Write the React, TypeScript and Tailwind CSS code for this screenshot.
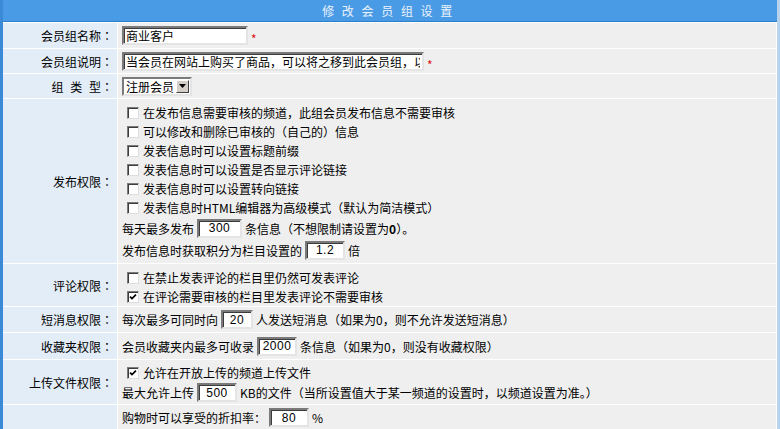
import React from 'react';

const font = "font-['Noto_Sans_CJK_SC','Noto_Sans',sans-serif]";

const Field = ({ value, className = '', center = false }: { value: string; className?: string; center?: boolean }) => (
  <input
    readOnly
    value={value}
    className={`h-[19px] shrink-0 bg-white border-2 border-t-[#7a7a7a] border-l-[#7a7a7a] border-r-[#e4e4e4] border-b-[#e4e4e4] shadow-[inset_1px_1px_0_#3c3c3c] px-[2px] text-[12px] leading-[15px] text-black outline-none ${
      center ? "text-center font-['Liberation_Sans',sans-serif] tracking-[0.5px]" : ''
    } ${className}`}
  />
);

const Check = ({ checked = false }: { checked?: boolean }) => (
  <span className="w-[12px] h-[12px] ml-[5px] mr-[4px] shrink-0 bg-white border border-t-[#7a7a7a] border-l-[#7a7a7a] border-r-[#dedede] border-b-[#dedede] shadow-[inset_1px_1px_0_#3c3c3c] flex items-center justify-center">
    {checked && (
      <svg width="8" height="8" viewBox="0 0 8 8">
        <path d="M1 3.6 L3 5.6 L7 1.6" fill="none" stroke="#000" strokeWidth="1.7" />
      </svg>
    )}
  </span>
);

const Line = ({ children, h = 'h-[19px]' }: { children: React.ReactNode; h?: string }) => (
  <div className={`${h} flex items-center whitespace-nowrap`}>{children}</div>
);

// label text followed by a centred full-width colon
const Label = ({ text, spaced = false }: { text: string; spaced?: boolean }) => (
  <span className={spaced ? '[word-spacing:4px]' : ''}>
    {text}
    <span className="font-['Noto_Sans_CJK_TC',sans-serif]">：</span>
  </span>
);

const Row = ({
  label,
  h,
  children,
  body = 'flex items-center',
}: {
  label: React.ReactNode;
  h: string;
  children: React.ReactNode;
  body?: string;
}) => (
  <div className={`${h} flex gap-px shrink-0`}>
    <div className="w-[114px] shrink-0 bg-[#e3edf8] flex items-center justify-end pr-[4px] whitespace-nowrap">{label}</div>
    <div className={`flex-1 bg-[#efefef] pl-[4px] ${body}`}>{children}</div>
  </div>
);

const Star = () => <span className="ml-[3px] text-[12px] text-[#e01010] translate-y-[3px]">*</span>;

export default function App() {
  return (
    <div
      className={`w-[780px] h-[429px] overflow-hidden bg-white border-l-[3px] border-l-[#3a8ad8] border-r-[3px] border-r-[#b8d3ee] pr-px flex flex-col gap-px text-[12px] leading-[19px] text-black ${font}`}
    >
      <div className="h-[22px] shrink-0 -ml-[3px] -mr-px bg-[#4a9be6] border-b border-b-[#2f7fc8] flex items-center justify-center text-[#eaf2fb] tracking-[2.5px]">
        修 改 会 员 组 设 置
      </div>

      <Row label={<Label text="会员组名称" />} h="h-[25px]">
        <Field value="商业客户" className="w-[126px]" />
        <Star />
      </Row>

      <Row label={<Label text="会员组说明" />} h="h-[24px]">
        <Field value="当会员在网站上购买了商品，可以将之移到此会员组，以给予更多的权限" className="w-[302px]" />
        <Star />
      </Row>

      <Row label={<Label text="组 类 型" spaced />} h="h-[24px]">
        <div className="h-[19px] w-[70px] bg-white border-2 border-t-[#7a7a7a] border-l-[#7a7a7a] border-r-[#e4e4e4] border-b-[#e4e4e4] flex items-center">
          <span className="flex-1 pl-[2px] leading-[15px]">注册会员</span>
          <span className="w-[13px] h-[13px] mr-[1px] bg-[#d4d0c8] border border-t-white border-l-white border-r-[#404040] border-b-[#404040] flex items-center justify-center">
            <svg width="7" height="4" viewBox="0 0 7 4">
              <path d="M0 0 H7 L3.5 4 Z" fill="#000" />
            </svg>
          </span>
        </div>
      </Row>

      <Row label={<Label text="发布权限" />} h="h-[164px]" body="flex flex-col pt-[4px]">
        <Line>
          <Check />
          在发布信息需要审核的频道，此组会员发布信息不需要审核
        </Line>
        <Line>
          <Check />
          可以修改和删除已审核的（自己的）信息
        </Line>
        <Line>
          <Check />
          发表信息时可以设置标题前缀
        </Line>
        <Line>
          <Check />
          发表信息时可以设置是否显示评论链接
        </Line>
        <Line>
          <Check />
          发表信息时可以设置转向链接
        </Line>
        <Line>
          <Check />
          发表信息时HTML编辑器为高级模式（默认为简洁模式）
        </Line>
        <Line h="h-[22px]">
          每天最多发布
          <Field value="300" center className="w-[45px] mx-[3px]" />
          条信息（不想限制请设置为<b>0</b>）。
        </Line>
        <Line h="h-[22px]">
          发布信息时获取积分为栏目设置的
          <Field value="1.2" center className="w-[40px] mx-[3px]" />
          倍
        </Line>
      </Row>

      <Row label={<Label text="评论权限" />} h="h-[42px]" body="flex flex-col pt-[4px]">
        <Line>
          <Check />
          在禁止发表评论的栏目里仍然可发表评论
        </Line>
        <Line>
          <Check checked />
          在评论需要审核的栏目里发表评论不需要审核
        </Line>
      </Row>

      <Row label={<Label text="短消息权限" />} h="h-[25px]">
        每次最多可同时向
        <Field value="20" center className="w-[32px] mx-[3px]" />
        人发送短消息（如果为0，则不允许发送短消息）
      </Row>

      <Row label={<Label text="收藏夹权限" />} h="h-[26px]">
        会员收藏夹内最多可收录
        <Field value="2000" center className="w-[40px] mx-[3px]" />
        条信息（如果为0，则没有收藏权限）
      </Row>

      <Row label={<Label text="上传文件权限" />} h="h-[44px]" body="flex flex-col pt-[3px]">
        <Line>
          <Check checked />
          允许在开放上传的频道上传文件
        </Line>
        <Line h="h-[21px]">
          最大允许上传
          <Field value="500" center className="w-[40px] mx-[3px]" />
          KB的文件（当所设置值大于某一频道的设置时，以频道设置为准。）
        </Line>
      </Row>

      <Row label="" h="h-[25px]">
        购物时可以享受的折扣率：
        <Field value="80" center className="w-[40px] mx-[3px]" />
        %
      </Row>
    </div>
  );
}
